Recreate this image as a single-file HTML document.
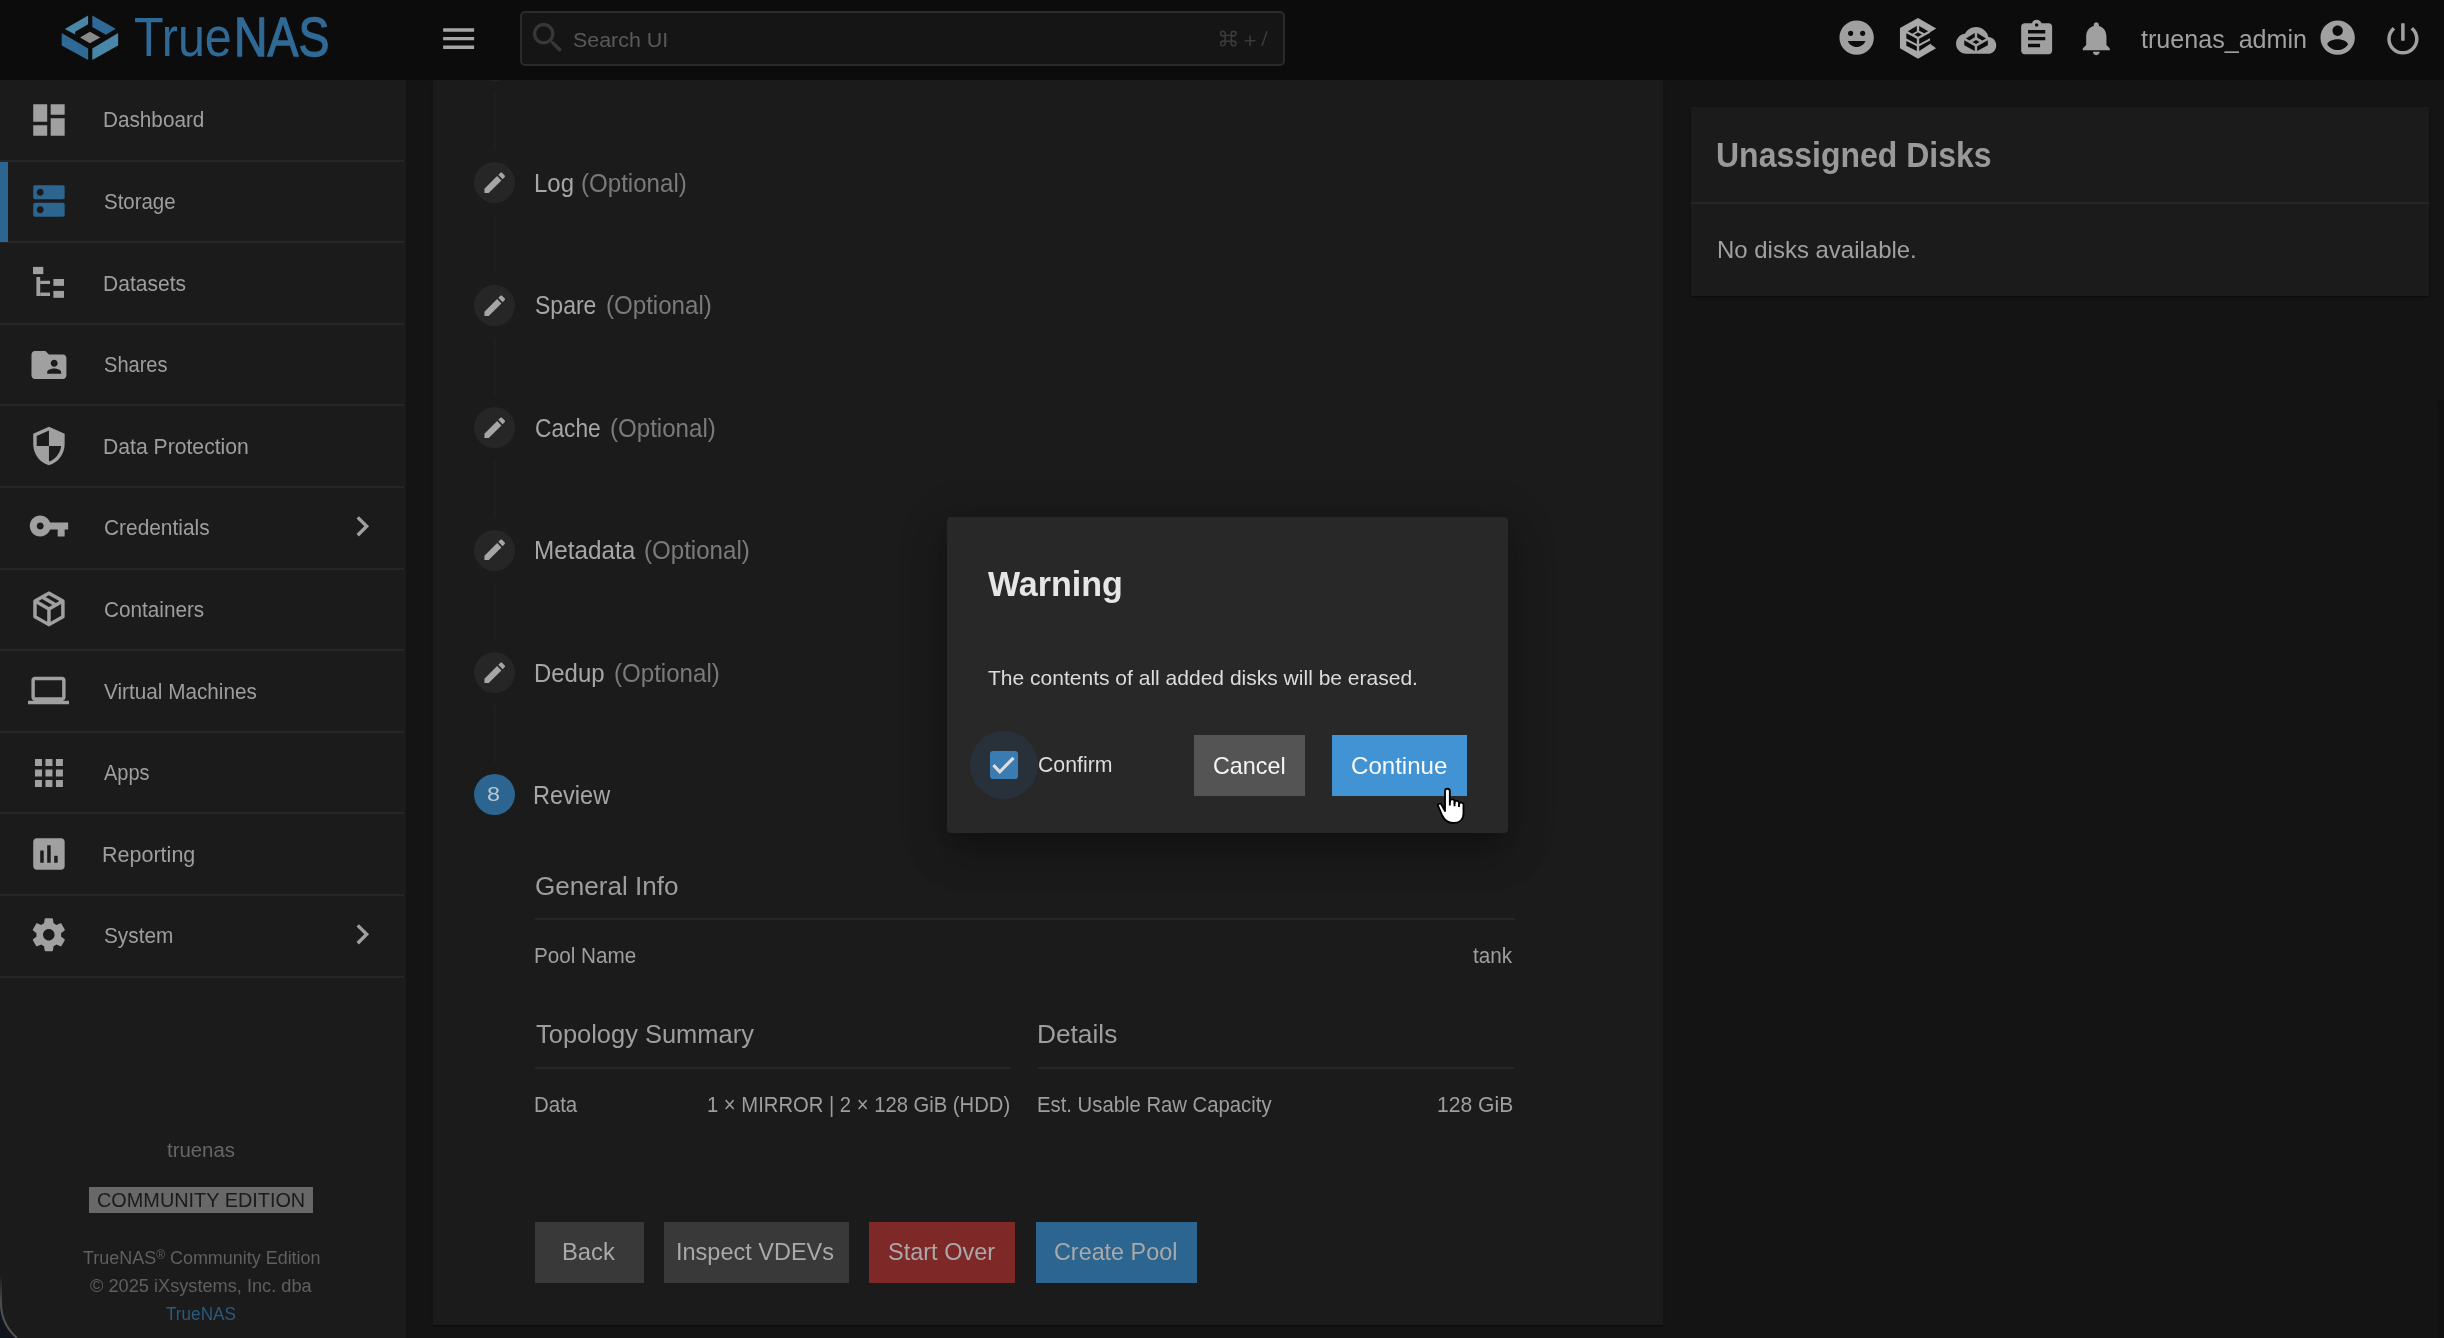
<!DOCTYPE html>
<html><head><meta charset="utf-8"><style>
html,body{margin:0;padding:0;width:2444px;height:1338px;overflow:hidden;background:#141414;}
body{position:relative;font-family:"Liberation Sans",sans-serif;}
.t{position:absolute;white-space:pre;line-height:1;transform:translateZ(0);}
.r{position:absolute;}
.i{position:absolute;overflow:visible;}
</style></head><body>
<div class="r" style="left:0.0px;top:0.0px;width:2444.0px;height:80.0px;background:#0c0c0c;"></div>
<svg class="i" style="left:0;top:0;width:340px;height:80px" viewBox="0 0 340 80">
<polygon fill="#4a86a8" points="64.7,29.1 88.1,15.6 88.1,24.2 75.2,31.7 75.2,34.6"/>
<polygon fill="#2f6a96" points="92.3,15.6 115.7,28.8 105.9,34.7 92.3,27.0"/>
<polygon fill="#2f6a96" points="61.7,33.1 88.1,48.5 88.1,60.1 61.7,45.4"/>
<polygon fill="#4a86a8" points="92.3,48.5 118.1,33.1 118.1,45.4 92.3,60.1"/>
<polygon fill="#8a8a8a" points="80.1,37.4 89.9,31.7 100.3,37.4 89.9,43.2"/>
</svg>
<div class="t" style="left:133.8px;top:9.9px;font-size:55px;letter-spacing:0.00px;color:#2f6a96;transform:translateZ(0) scaleX(0.8806);transform-origin:0 0;">True</div>
<div class="t" style="left:233.8px;top:9.9px;font-size:55px;letter-spacing:0.00px;color:#2f6a96;-webkit-text-stroke:1.3px #2f6a96;transform:translateZ(0) scaleX(0.8430);transform-origin:0 0;">NAS</div>
<svg class="i" style="left:437.8px;top:17.7px;width:41.3px;height:41.3px;" viewBox="0 0 24 24"><path fill="#a6a6a6" d="M3 18h18v-2H3v2zm0-5h18v-2H3v2zm0-7v2h18V6H3z"/></svg>
<div class="r" style="left:520.0px;top:10.8px;width:765.0px;height:55.2px;background:#151515;box-sizing:border-box;border:2px solid #2a2a2a;border-radius:5px;"></div>
<svg class="i" style="left:528.3px;top:18.2px;width:39.7px;height:39.7px;" viewBox="0 0 24 24"><path fill="#383838" d="M15.5 14h-.79l-.28-.27C15.41 12.59 16 11.11 16 9.5 16 5.91 13.09 3 9.5 3S3 5.91 3 9.5 5.91 16 9.5 16c1.61 0 3.09-.59 4.23-1.57l.27.28v.79l5 4.99L20.49 19l-4.99-5zm-6 0C7.01 14 5 11.99 5 9.5S7.01 5 9.5 5 14 7.01 14 9.5 11.99 14 9.5 14z"/></svg>
<div class="t" style="left:572.6px;top:29.2px;font-size:21px;letter-spacing:0.00px;color:#5a5a5a;transform:translateZ(0) scaleX(1.0198);transform-origin:0 0;">Search UI</div>
<svg class="i" style="left:1215px;top:26px;width:60px;height:26px" viewBox="1215 26 60 26"><g fill="none" stroke="#3a3a3a" stroke-width="1.6"><path d="M1225.2 35.2 H1231.3 V41.3 H1225.2 Z M1225.2 35.2 V33.6 A2.3 2.3 0 1 0 1222.9 35.9 H1225.2 M1231.3 35.2 V33.6 A2.3 2.3 0 1 1 1233.6 35.9 H1231.3 M1225.2 41.3 V43.4 A2.3 2.3 0 1 1 1222.9 41.1 H1225.2 M1231.3 41.3 V43.4 A2.3 2.3 0 1 0 1233.6 41.1 H1231.3"/><path d="M1250.1 35.4 V46.1 M1244.8 40.8 H1255.4"/><path d="M1267 31.2 L1262 46.1"/></g></svg>
<svg class="i" style="left:1836.0px;top:17.2px;width:41.3px;height:41.3px;" viewBox="0 0 24 24"><path fill="#a0a0a0" d="M12,2C6.47,2 2,6.5 2,12A10,10 0 0,0 12,22A10,10 0 0,0 22,12A10,10 0 0,0 12,2M15.5,8A1.5,1.5 0 0,1 17,9.5A1.5,1.5 0 0,1 15.5,11A1.5,1.5 0 0,1 14,9.5A1.5,1.5 0 0,1 15.5,8M8.5,8A1.5,1.5 0 0,1 10,9.5A1.5,1.5 0 0,1 8.5,11A1.5,1.5 0 0,1 7,9.5A1.5,1.5 0 0,1 8.5,8M12,17.5C9.67,17.5 7.69,16.04 6.89,14H17.11C16.31,16.04 14.33,17.5 12,17.5Z"/></svg>
<svg class="i" style="left:2015.8px;top:18.2px;width:41.3px;height:41.3px;" viewBox="0 0 24 24"><path fill="#a0a0a0" d="M19 3h-4.18C14.4 1.84 13.3 1 12 1c-1.3 0-2.4.84-2.82 2H5c-1.1 0-2 .9-2 2v14c0 1.1.9 2 2 2h14c1.1 0 2-.9 2-2V5c0-1.1-.9-2-2-2zm-7 0c.55 0 1 .45 1 1s-.45 1-1 1-1-.45-1-1 .45-1 1-1zm2 14H7v-2h7v2zm3-4H7v-2h10v2zm0-4H7V7h10v2z"/></svg>
<svg class="i" style="left:2076.2px;top:18.0px;width:40.6px;height:40.6px;" viewBox="0 0 24 24"><path fill="#a0a0a0" d="M12 22c1.1 0 2-.9 2-2h-4c0 1.1.89 2 2 2zm6-6v-5c0-3.07-1.64-5.64-4.5-6.32V4c0-.83-.67-1.5-1.5-1.5s-1.5.67-1.5 1.5v.68C7.63 5.36 6 7.92 6 11v5l-2 2v1h16v-1l-2-2z"/></svg>
<div class="t" style="left:2140.7px;top:26.8px;font-size:25px;letter-spacing:0.00px;color:#a0a0a0;transform:translateZ(0) scaleX(1.0037);transform-origin:0 0;">truenas_admin</div>
<svg class="i" style="left:2317.2px;top:17.1px;width:41.3px;height:41.3px;" viewBox="0 0 24 24"><path fill="#a0a0a0" d="M12 2C6.48 2 2 6.48 2 12s4.48 10 10 10 10-4.48 10-10S17.52 2 12 2zm0 3c1.66 0 3 1.34 3 3s-1.34 3-3 3-3-1.34-3-3 1.34-3 3-3zm0 14.2c-2.5 0-4.71-1.28-6-3.22.03-1.99 4-3.08 6-3.08 1.99 0 5.97 1.09 6 3.08-1.29 1.94-3.5 3.22-6 3.22z"/></svg>
<svg class="i" style="left:2381.6px;top:17.8px;width:41.8px;height:41.8px;" viewBox="0 0 24 24"><path fill="#a0a0a0" d="M13 3h-2v10h2V3zm4.83 2.17l-1.42 1.42C17.99 7.86 19 9.81 19 12c0 3.87-3.13 7-7 7s-7-3.13-7-7c0-2.19 1.01-4.14 2.58-5.42L6.17 5.17C4.23 6.82 3 9.26 3 12c0 4.97 4.03 9 9 9s9-4.03 9-9c0-2.74-1.23-5.18-3.17-6.83z"/></svg>
<svg class="i" style="left:1896px;top:16px;width:44px;height:46px" viewBox="0 0 1280 1338">
<polygon fill="#a8a8a8" points="640,55 1170,365 990,470 990,810 1165,940 640,1245 115,940 115,350"/>
<g fill="#0c0c0c">
<polygon points="345,440 605,292 605,445 470,515"/>
<polygon points="675,292 935,440 820,505 675,430"/>
<polygon points="530,540 640,478 755,540 640,605"/>
<polygon points="300,500 605,662 605,815 300,658"/>
<polygon points="300,725 605,880 605,1020 300,862"/>
<polygon points="675,662 990,490 990,645 675,815"/>
<polygon points="675,880 990,710 990,815 675,1020"/>
</g>
</svg>
<svg class="i" style="left:1952px;top:22px;width:48px;height:36px" viewBox="0 0 1784 1338">
<g transform="translate(150,-64) scale(62.26)"><path fill="#a0a0a0" d="M19.35 10.04C18.67 6.59 15.64 4 12 4 9.11 4 6.6 5.64 5.35 8.04 2.34 8.36 0 10.91 0 14c0 3.31 2.69 6 6 6h13c2.76 0 5-2.24 5-5 0-2.64-2.05-4.78-4.65-4.96z"/></g>
<g fill="#0c0c0c">
<polygon points="515,610 845,410 845,570 650,690"/>
<polygon points="935,410 1265,610 1130,690 935,575"/>
<polygon points="760,740 895,665 1025,740 895,815"/>
<polygon points="455,680 845,900 845,1075 455,860"/>
<polygon points="935,900 1330,680 1330,860 935,1075"/>
</g>
</svg>
<div class="r" style="left:0.0px;top:80.0px;width:406.0px;height:1258.0px;background:#1b1b1b;"></div>
<div class="r" style="left:0.0px;top:159.6px;width:404.0px;height:2.0px;background:#262626;"></div>
<svg class="i" style="left:27.6px;top:98.7px;width:41.9px;height:41.9px;" viewBox="0 0 24 24"><path fill="#a0a0a0" d="M3 13h8V3H3v10zm0 8h8v-6H3v6zm10 0h8V11h-8v10zm0-18v6h8V3h-8z"/></svg>
<div class="t" style="left:102.5px;top:109.4px;font-size:22px;letter-spacing:0.00px;color:#9e9e9e;transform:translateZ(0) scaleX(0.9419);transform-origin:0 0;">Dashboard</div>
<div class="r" style="left:0.0px;top:241.2px;width:404.0px;height:2.0px;background:#262626;"></div>
<svg class="i" style="left:27.6px;top:180.3px;width:41.9px;height:41.9px;" viewBox="0 0 24 24"><path fill="#2c6590" d="M20 13H4c-.55 0-1 .45-1 1v6c0 .55.45 1 1 1h16c.55 0 1-.45 1-1v-6c0-.55-.45-1-1-1zM7 19c-1.1 0-2-.9-2-2s.9-2 2-2 2 .9 2 2-.9 2-2 2zM20 3H4c-.55 0-1 .45-1 1v6c0 .55.45 1 1 1h16c.55 0 1-.45 1-1V4c0-.55-.45-1-1-1zM7 9c-1.1 0-2-.9-2-2s.9-2 2-2 2 .9 2 2-.9 2-2 2z"/></svg>
<div class="t" style="left:103.5px;top:191.0px;font-size:22px;letter-spacing:0.00px;color:#9e9e9e;transform:translateZ(0) scaleX(0.9293);transform-origin:0 0;">Storage</div>
<div class="r" style="left:0.0px;top:322.8px;width:404.0px;height:2.0px;background:#262626;"></div>
<svg class="i" style="left:0;top:-0.5px;width:80px;height:320px" viewBox="0 0 80 320">
<rect fill="#a0a0a0" x="33" y="266.9" width="10.3" height="7.2"/>
<rect fill="#a0a0a0" x="36.4" y="277" width="3.8" height="19"/>
<rect fill="#a0a0a0" x="40.2" y="280.8" width="9.8" height="3.2"/>
<rect fill="#a0a0a0" x="40.2" y="292.6" width="9.8" height="3.4"/>
<rect fill="#a0a0a0" x="53.4" y="279" width="10.6" height="6.9"/>
<rect fill="#a0a0a0" x="53.4" y="290.9" width="10.6" height="6.9"/>
</svg>
<div class="t" style="left:102.5px;top:272.6px;font-size:22px;letter-spacing:0.00px;color:#9e9e9e;transform:translateZ(0) scaleX(0.9560);transform-origin:0 0;">Datasets</div>
<div class="r" style="left:0.0px;top:404.4px;width:404.0px;height:2.0px;background:#262626;"></div>
<svg class="i" style="left:27.6px;top:343.5px;width:41.9px;height:41.9px;" viewBox="0 0 24 24"><path fill="#a0a0a0" d="M20 6h-8l-2-2H4c-1.1 0-1.99.9-1.99 2L2 18c0 1.1.9 2 2 2h16c1.1 0 2-.9 2-2V8c0-1.1-.9-2-2-2zm-5 3c1.1 0 2 .9 2 2s-.9 2-2 2-2-.9-2-2 .9-2 2-2zm4 8h-8v-1c0-1.33 2.67-2 4-2s4 .67 4 2v1z"/></svg>
<div class="t" style="left:103.5px;top:354.2px;font-size:22px;letter-spacing:0.00px;color:#9e9e9e;transform:translateZ(0) scaleX(0.9118);transform-origin:0 0;">Shares</div>
<div class="r" style="left:0.0px;top:486.0px;width:404.0px;height:2.0px;background:#262626;"></div>
<svg class="i" style="left:27.6px;top:425.1px;width:41.9px;height:41.9px;" viewBox="0 0 24 24"><path fill="#a0a0a0" d="M12 1L3 5v6c0 5.55 3.84 10.74 9 12 5.16-1.26 9-6.45 9-12V5l-9-4zm0 10.99h7c-.53 4.12-3.28 7.79-7 8.94V12H5V6.3l7-3.11v8.8z"/></svg>
<div class="t" style="left:102.5px;top:435.8px;font-size:22px;letter-spacing:0.00px;color:#9e9e9e;transform:translateZ(0) scaleX(0.9617);transform-origin:0 0;">Data Protection</div>
<div class="r" style="left:0.0px;top:567.6px;width:404.0px;height:2.0px;background:#262626;"></div>
<svg class="i" style="left:27.6px;top:504.7px;width:41.9px;height:41.9px;" viewBox="0 0 24 24"><path fill="#a0a0a0" d="M12.65 10C11.83 7.67 9.61 6 7 6c-3.31 0-6 2.69-6 6s2.69 6 6 6c2.61 0 4.83-1.67 5.65-4H17v4h4v-4h2v-4H12.65zM7 14c-1.1 0-2-.9-2-2s.9-2 2-2 2 .9 2 2-.9 2-2 2z"/></svg>
<div class="t" style="left:103.5px;top:517.4px;font-size:22px;letter-spacing:0.00px;color:#9e9e9e;transform:translateZ(0) scaleX(0.9491);transform-origin:0 0;">Credentials</div>
<svg class="i" style="left:342.1px;top:506.4px;width:40.6px;height:40.6px;" viewBox="0 0 24 24"><path fill="#a0a0a0" d="M10 6L8.59 7.41 13.17 12l-4.58 4.59L10 18l6-6z"/></svg>
<div class="r" style="left:0.0px;top:649.2px;width:404.0px;height:2.0px;background:#262626;"></div>
<svg class="i" style="left:27.6px;top:588.3px;width:41.9px;height:41.9px;" viewBox="0 0 24 24"><path fill="#a0a0a0" d="M21,16.5C21,16.88 20.79,17.21 20.47,17.38L12.57,21.82C12.41,21.94 12.21,22 12,22C11.79,22 11.59,21.94 11.43,21.82L3.53,17.38C3.21,17.21 3,16.88 3,16.5V7.5C3,7.12 3.21,6.79 3.53,6.62L11.43,2.18C11.59,2.06 11.79,2 12,2C12.21,2 12.41,2.06 12.57,2.18L20.47,6.62C20.79,6.79 21,7.12 21,7.5V16.5M12,4.15L10.11,5.22L16,8.61L17.96,7.5L12,4.15M6.04,7.5L12,10.85L13.96,9.75L8.08,6.35L6.04,7.5M5,15.91L11,19.29V12.58L5,9.21V15.91M19,15.91V9.21L13,12.58V19.29L19,15.91Z"/></svg>
<div class="t" style="left:103.5px;top:599.0px;font-size:22px;letter-spacing:0.00px;color:#9e9e9e;transform:translateZ(0) scaleX(0.9419);transform-origin:0 0;">Containers</div>
<div class="r" style="left:0.0px;top:730.8px;width:404.0px;height:2.0px;background:#262626;"></div>
<svg class="i" style="left:27.8px;top:669.8px;width:41.0px;height:41.0px;" viewBox="0 0 24 24"><path fill="#a0a0a0" d="M20 18c1.1 0 1.99-.9 1.99-2L22 6c0-1.1-.9-2-2-2H4c-1.1 0-2 .9-2 2v10c0 1.1.9 2 2 2H0v2h24v-2h-4zM4 6h16v10H4V6z"/></svg>
<div class="t" style="left:104.4px;top:680.6px;font-size:22px;letter-spacing:0.00px;color:#9e9e9e;transform:translateZ(0) scaleX(0.9426);transform-origin:0 0;">Virtual Machines</div>
<div class="r" style="left:0.0px;top:812.4px;width:404.0px;height:2.0px;background:#262626;"></div>
<svg class="i" style="left:27.6px;top:751.5px;width:41.9px;height:41.9px;" viewBox="0 0 24 24"><path fill="#a0a0a0" d="M4 8h4V4H4v4zm6 12h4v-4h-4v4zm-6 0h4v-4H4v4zm0-6h4v-4H4v4zm6 0h4v-4h-4v4zm6-10v4h4V4h-4zm-6 4h4V4h-4v4zm6 6h4v-4h-4v4zm0 6h4v-4h-4v4z"/></svg>
<div class="t" style="left:104.4px;top:762.2px;font-size:22px;letter-spacing:0.00px;color:#9e9e9e;transform:translateZ(0) scaleX(0.9100);transform-origin:0 0;">Apps</div>
<div class="r" style="left:0.0px;top:894.0px;width:404.0px;height:2.0px;background:#262626;"></div>
<svg class="i" style="left:27.6px;top:833.1px;width:41.9px;height:41.9px;" viewBox="0 0 24 24"><path fill="#a0a0a0" d="M19 3H5c-1.1 0-2 .9-2 2v14c0 1.1.9 2 2 2h14c1.1 0 2-.9 2-2V5c0-1.1-.9-2-2-2zM9 17H7v-7h2v7zm4 0h-2V7h2v10zm4 0h-2v-4h2v4z"/></svg>
<div class="t" style="left:102.4px;top:843.8px;font-size:22px;letter-spacing:0.00px;color:#9e9e9e;transform:translateZ(0) scaleX(0.9783);transform-origin:0 0;">Reporting</div>
<div class="r" style="left:0.0px;top:975.6px;width:404.0px;height:2.0px;background:#262626;"></div>
<svg class="i" style="left:28.6px;top:914.5px;width:39.6px;height:39.6px;" viewBox="0 0 24 24"><path fill="#a0a0a0" d="M19.43 12.98c.04-.32.07-.64.07-.98s-.03-.66-.07-.98l2.11-1.65c.19-.15.24-.42.12-.64l-2-3.46c-.12-.22-.39-.3-.61-.22l-2.49 1c-.52-.4-1.08-.73-1.69-.98l-.38-2.65C14.46 2.18 14.25 2 14 2h-4c-.25 0-.46.18-.49.42l-.38 2.65c-.61.25-1.17.59-1.69.98l-2.49-1c-.23-.09-.49 0-.61.22l-2 3.46c-.13.22-.07.49.12.64l2.11 1.65c-.04.32-.07.65-.07.98s.03.66.07.98l-2.11 1.65c-.19.15-.24.42-.12.64l2 3.46c.12.22.39.3.61.22l2.49-1c.52.4 1.08.73 1.69.98l.38 2.65c.03.24.24.42.49.42h4c.25 0 .46-.18.49-.42l.38-2.65c.61-.25 1.17-.59 1.69-.98l2.49 1c.23.09.49 0 .61-.22l2-3.46c.12-.22.07-.49-.12-.64l-2.11-1.65zM12 15.5c-1.93 0-3.5-1.57-3.5-3.5s1.57-3.5 3.5-3.5 3.5 1.57 3.5 3.5-1.57 3.5-3.5 3.5z"/></svg>
<div class="t" style="left:103.5px;top:925.4px;font-size:22px;letter-spacing:0.00px;color:#9e9e9e;transform:translateZ(0) scaleX(0.9451);transform-origin:0 0;">System</div>
<svg class="i" style="left:342.1px;top:914.4px;width:40.6px;height:40.6px;" viewBox="0 0 24 24"><path fill="#a0a0a0" d="M10 6L8.59 7.41 13.17 12l-4.58 4.59L10 18l6-6z"/></svg>
<div class="r" style="left:0.0px;top:161.5px;width:8.0px;height:80.0px;background:#2c6590;"></div>
<div class="t" style="left:166.9px;top:1140.3px;font-size:20.5px;letter-spacing:0.00px;color:#666666;transform:translateZ(0) scaleX(0.9941);transform-origin:0 0;">truenas</div>
<div class="r" style="left:89.0px;top:1187.0px;width:224.0px;height:26.0px;background:#686868;"></div>
<div class="t" style="left:96.7px;top:1190.1px;font-size:20px;letter-spacing:0.00px;color:#1b1b1b;transform:translateZ(0) scaleX(0.9932);transform-origin:0 0;">COMMUNITY EDITION</div>
<div class="t" style="left:82.7px;top:1248.6px;font-size:18px;letter-spacing:0.00px;color:#5f5f5f;transform:translateZ(0) scaleX(0.9970);transform-origin:0 0;">TrueNAS<span style="font-size:12px;vertical-align:5px">®</span> Community Edition</div>
<div class="t" style="left:90.2px;top:1277.0px;font-size:18px;letter-spacing:0.00px;color:#5f5f5f;transform:translateZ(0) scaleX(1.0105);transform-origin:0 0;">© 2025 iXsystems, Inc. dba</div>
<div class="t" style="left:166.4px;top:1304.7px;font-size:18px;letter-spacing:0.00px;color:#295a7f;transform:translateZ(0) scaleX(0.9534);transform-origin:0 0;">TrueNAS</div>
<div class="r" style="left:433.0px;top:80.0px;width:1230.0px;height:1244.5px;background:#1b1b1b;box-shadow:0 2px 1px -1px rgba(0,0,0,.2),0 1px 1px 0 rgba(0,0,0,.14),0 1px 3px 0 rgba(0,0,0,.12);"></div>
<div class="r" style="left:494.0px;top:93.0px;width:2.0px;height:57.4px;background:#1f1f1f;"></div>
<div class="r" style="left:494.0px;top:215.4px;width:2.0px;height:57.4px;background:#1f1f1f;"></div>
<div class="r" style="left:494.0px;top:337.8px;width:2.0px;height:57.4px;background:#1f1f1f;"></div>
<div class="r" style="left:494.0px;top:460.2px;width:2.0px;height:57.4px;background:#1f1f1f;"></div>
<div class="r" style="left:494.0px;top:582.6px;width:2.0px;height:57.4px;background:#1f1f1f;"></div>
<div class="r" style="left:494.0px;top:705.0px;width:2.0px;height:57.4px;background:#1f1f1f;"></div>
<div class="r" style="left:473.9px;top:162.4px;width:41.0px;height:41.0px;background:#262626;border-radius:50%;"></div>
<svg class="i" style="left:480.7px;top:169.2px;width:27.5px;height:27.5px;" viewBox="0 0 24 24"><path fill="#a6a6a6" d="M3 17.25V21h3.75L17.81 9.94l-3.75-3.75L3 17.25zM20.71 7.04c.39-.39.39-1.02 0-1.41l-2.34-2.34c-.39-.39-1.02-.39-1.41 0l-1.83 1.83 3.75 3.75 1.83-1.83z"/></svg>
<div class="t" style="left:534.1px;top:171.0px;font-size:25px;letter-spacing:0.00px;color:#a6a6a6;transform:translateZ(0) scaleX(0.9579);transform-origin:0 0;">Log</div>
<div class="t" style="left:581.3px;top:171.0px;font-size:25px;letter-spacing:0.00px;color:#7a7a7a;transform:translateZ(0) scaleX(0.9639);transform-origin:0 0;">(Optional)</div>
<div class="r" style="left:473.9px;top:284.8px;width:41.0px;height:41.0px;background:#262626;border-radius:50%;"></div>
<svg class="i" style="left:480.7px;top:291.6px;width:27.5px;height:27.5px;" viewBox="0 0 24 24"><path fill="#a6a6a6" d="M3 17.25V21h3.75L17.81 9.94l-3.75-3.75L3 17.25zM20.71 7.04c.39-.39.39-1.02 0-1.41l-2.34-2.34c-.39-.39-1.02-.39-1.41 0l-1.83 1.83 3.75 3.75 1.83-1.83z"/></svg>
<div class="t" style="left:535.1px;top:293.4px;font-size:25px;letter-spacing:0.00px;color:#a6a6a6;transform:translateZ(0) scaleX(0.9200);transform-origin:0 0;">Spare</div>
<div class="t" style="left:605.9px;top:293.4px;font-size:25px;letter-spacing:0.00px;color:#7a7a7a;transform:translateZ(0) scaleX(0.9639);transform-origin:0 0;">(Optional)</div>
<div class="r" style="left:473.9px;top:407.2px;width:41.0px;height:41.0px;background:#262626;border-radius:50%;"></div>
<svg class="i" style="left:480.7px;top:414.0px;width:27.5px;height:27.5px;" viewBox="0 0 24 24"><path fill="#a6a6a6" d="M3 17.25V21h3.75L17.81 9.94l-3.75-3.75L3 17.25zM20.71 7.04c.39-.39.39-1.02 0-1.41l-2.34-2.34c-.39-.39-1.02-.39-1.41 0l-1.83 1.83 3.75 3.75 1.83-1.83z"/></svg>
<div class="t" style="left:535.1px;top:415.8px;font-size:25px;letter-spacing:0.00px;color:#a6a6a6;transform:translateZ(0) scaleX(0.9100);transform-origin:0 0;">Cache</div>
<div class="t" style="left:609.8px;top:415.8px;font-size:25px;letter-spacing:0.00px;color:#7a7a7a;transform:translateZ(0) scaleX(0.9639);transform-origin:0 0;">(Optional)</div>
<div class="r" style="left:473.9px;top:529.6px;width:41.0px;height:41.0px;background:#262626;border-radius:50%;"></div>
<svg class="i" style="left:480.7px;top:536.4px;width:27.5px;height:27.5px;" viewBox="0 0 24 24"><path fill="#a6a6a6" d="M3 17.25V21h3.75L17.81 9.94l-3.75-3.75L3 17.25zM20.71 7.04c.39-.39.39-1.02 0-1.41l-2.34-2.34c-.39-.39-1.02-.39-1.41 0l-1.83 1.83 3.75 3.75 1.83-1.83z"/></svg>
<div class="t" style="left:534.1px;top:538.2px;font-size:25px;letter-spacing:0.00px;color:#a6a6a6;transform:translateZ(0) scaleX(0.9706);transform-origin:0 0;">Metadata</div>
<div class="t" style="left:644.3px;top:538.2px;font-size:25px;letter-spacing:0.00px;color:#7a7a7a;transform:translateZ(0) scaleX(0.9639);transform-origin:0 0;">(Optional)</div>
<div class="r" style="left:473.9px;top:652.0px;width:41.0px;height:41.0px;background:#262626;border-radius:50%;"></div>
<svg class="i" style="left:480.7px;top:658.8px;width:27.5px;height:27.5px;" viewBox="0 0 24 24"><path fill="#a6a6a6" d="M3 17.25V21h3.75L17.81 9.94l-3.75-3.75L3 17.25zM20.71 7.04c.39-.39.39-1.02 0-1.41l-2.34-2.34c-.39-.39-1.02-.39-1.41 0l-1.83 1.83 3.75 3.75 1.83-1.83z"/></svg>
<div class="t" style="left:534.1px;top:660.6px;font-size:25px;letter-spacing:0.00px;color:#a6a6a6;transform:translateZ(0) scaleX(0.9577);transform-origin:0 0;">Dedup</div>
<div class="t" style="left:613.6px;top:660.6px;font-size:25px;letter-spacing:0.00px;color:#7a7a7a;transform:translateZ(0) scaleX(0.9639);transform-origin:0 0;">(Optional)</div>
<div class="r" style="left:473.9px;top:40.0px;width:41.0px;height:41.0px;background:#262626;border-radius:50%;"></div>
<div class="r" style="left:473.9px;top:774.4px;width:41.0px;height:41.0px;background:#2c6590;border-radius:50%;"></div>
<div class="t" style="left:487.0px;top:784.5px;font-size:19.5px;letter-spacing:0.00px;color:#b9c7d2;transform:translateZ(0) scaleX(1.2000);transform-origin:0 0;">8</div>
<div class="t" style="left:533.1px;top:783.0px;font-size:25px;letter-spacing:0.00px;color:#a6a6a6;transform:translateZ(0) scaleX(0.9412);transform-origin:0 0;">Review</div>
<div class="r" style="left:433.0px;top:0.0px;width:1230.0px;height:80.0px;background:#0c0c0c;"></div>
<div class="r" style="left:520.0px;top:10.8px;width:765.0px;height:55.2px;background:#151515;box-sizing:border-box;border:2px solid #2a2a2a;border-radius:5px;"></div>
<svg class="i" style="left:528.3px;top:18.2px;width:39.7px;height:39.7px;" viewBox="0 0 24 24"><path fill="#383838" d="M15.5 14h-.79l-.28-.27C15.41 12.59 16 11.11 16 9.5 16 5.91 13.09 3 9.5 3S3 5.91 3 9.5 5.91 16 9.5 16c1.61 0 3.09-.59 4.23-1.57l.27.28v.79l5 4.99L20.49 19l-4.99-5zm-6 0C7.01 14 5 11.99 5 9.5S7.01 5 9.5 5 14 7.01 14 9.5 11.99 14 9.5 14z"/></svg>
<div class="t" style="left:572.6px;top:29.2px;font-size:21px;letter-spacing:0.00px;color:#5a5a5a;transform:translateZ(0) scaleX(1.0198);transform-origin:0 0;">Search UI</div>
<svg class="i" style="left:1215px;top:26px;width:60px;height:26px" viewBox="1215 26 60 26"><g fill="none" stroke="#3a3a3a" stroke-width="1.6"><path d="M1225.2 35.2 H1231.3 V41.3 H1225.2 Z M1225.2 35.2 V33.6 A2.3 2.3 0 1 0 1222.9 35.9 H1225.2 M1231.3 35.2 V33.6 A2.3 2.3 0 1 1 1233.6 35.9 H1231.3 M1225.2 41.3 V43.4 A2.3 2.3 0 1 1 1222.9 41.1 H1225.2 M1231.3 41.3 V43.4 A2.3 2.3 0 1 0 1233.6 41.1 H1231.3"/><path d="M1250.1 35.4 V46.1 M1244.8 40.8 H1255.4"/><path d="M1267 31.2 L1262 46.1"/></g></svg>
<svg class="i" style="left:437.8px;top:17.7px;width:41.3px;height:41.3px;" viewBox="0 0 24 24"><path fill="#a6a6a6" d="M3 18h18v-2H3v2zm0-5h18v-2H3v2zm0-7v2h18V6H3z"/></svg>
<div class="t" style="left:535.0px;top:873.6px;font-size:25.7px;letter-spacing:0.00px;color:#9e9e9e;transform:translateZ(0) scaleX(1.0151);transform-origin:0 0;">General Info</div>
<div class="r" style="left:535.0px;top:918.0px;width:980.0px;height:2.0px;background:#262626;"></div>
<div class="t" style="left:534.1px;top:946.1px;font-size:21.5px;letter-spacing:0.00px;color:#9e9e9e;transform:translateZ(0) scaleX(0.9615);transform-origin:0 0;">Pool Name</div>
<div class="t" style="left:1473.2px;top:946.1px;font-size:21.5px;letter-spacing:0.00px;color:#9e9e9e;transform:translateZ(0) scaleX(0.9610);transform-origin:0 0;">tank</div>
<div class="t" style="left:536.0px;top:1022.2px;font-size:25.7px;letter-spacing:0.00px;color:#9e9e9e;transform:translateZ(0) scaleX(0.9909);transform-origin:0 0;">Topology Summary</div>
<div class="r" style="left:535.0px;top:1067.0px;width:475.5px;height:2.0px;background:#262626;"></div>
<div class="t" style="left:1037.1px;top:1022.0px;font-size:25.7px;letter-spacing:0.00px;color:#9e9e9e;transform:translateZ(0) scaleX(1.0224);transform-origin:0 0;">Details</div>
<div class="r" style="left:1038.0px;top:1067.0px;width:476.0px;height:2.0px;background:#262626;"></div>
<div class="t" style="left:534.1px;top:1095.0px;font-size:21.5px;letter-spacing:0.00px;color:#9e9e9e;transform:translateZ(0) scaleX(0.9523);transform-origin:0 0;">Data</div>
<div class="t" style="left:707.4px;top:1095.0px;font-size:21.5px;letter-spacing:0.00px;color:#9e9e9e;transform:translateZ(0) scaleX(0.9409);transform-origin:0 0;">1 × MIRROR | 2 × 128 GiB (HDD)</div>
<div class="t" style="left:1037.1px;top:1094.8px;font-size:21.5px;letter-spacing:0.00px;color:#9e9e9e;transform:translateZ(0) scaleX(0.9437);transform-origin:0 0;">Est. Usable Raw Capacity</div>
<div class="t" style="left:1437.0px;top:1094.8px;font-size:21.5px;letter-spacing:0.00px;color:#9e9e9e;transform:translateZ(0) scaleX(0.9816);transform-origin:0 0;">128 GiB</div>
<div class="r" style="left:535.0px;top:1222.0px;width:109.0px;height:61.0px;background:#393939;"></div>
<div class="t" style="left:562.3px;top:1240.1px;font-size:24.8px;letter-spacing:0.00px;color:#a9a9a9;transform:translateZ(0) scaleX(0.9585);transform-origin:0 0;">Back</div>
<div class="r" style="left:664.0px;top:1222.0px;width:185.0px;height:61.0px;background:#393939;"></div>
<div class="t" style="left:676.4px;top:1240.1px;font-size:24.8px;letter-spacing:0.00px;color:#a9a9a9;transform:translateZ(0) scaleX(0.9476);transform-origin:0 0;">Inspect VDEVs</div>
<div class="r" style="left:869.0px;top:1222.0px;width:146.0px;height:61.0px;background:#7f2828;"></div>
<div class="t" style="left:887.8px;top:1240.1px;font-size:24.8px;letter-spacing:0.00px;color:#a9a9a9;transform:translateZ(0) scaleX(0.9473);transform-origin:0 0;">Start Over</div>
<div class="r" style="left:1036.0px;top:1222.0px;width:161.0px;height:61.0px;background:#2c6590;"></div>
<div class="t" style="left:1054.3px;top:1240.1px;font-size:24.8px;letter-spacing:0.00px;color:#a9a9a9;transform:translateZ(0) scaleX(0.9419);transform-origin:0 0;">Create Pool</div>
<div class="r" style="left:1691.0px;top:106.5px;width:738.0px;height:189.0px;background:#1b1b1b;box-shadow:0 2px 1px -1px rgba(0,0,0,.2),0 1px 1px 0 rgba(0,0,0,.14),0 1px 3px 0 rgba(0,0,0,.12);"></div>
<div class="r" style="left:1691.0px;top:202.0px;width:738.0px;height:2.0px;background:#262626;"></div>
<div class="t" style="left:1716.4px;top:137.5px;font-size:34.7px;letter-spacing:0.00px;color:#999999;font-weight:700;transform:translateZ(0) scaleX(0.9220);transform-origin:0 0;">Unassigned Disks</div>
<div class="t" style="left:1716.7px;top:238.3px;font-size:24.5px;letter-spacing:0.00px;color:#a0a0a0;transform:translateZ(0) scaleX(0.9780);transform-origin:0 0;">No disks available.</div>
<div class="r" style="left:2438.0px;top:400.0px;width:6.0px;height:938.0px;background:#101010;border-radius:4px 0 0 0;"></div>
<div class="r" style="left:947.0px;top:517.0px;width:561.0px;height:316.0px;background:#282828;border-radius:4px;box-shadow:0 11px 15px -7px rgba(0,0,0,.2),0 24px 38px 3px rgba(0,0,0,.14),0 9px 46px 8px rgba(0,0,0,.12);"></div>
<div class="t" style="left:987.8px;top:567.0px;font-size:34.5px;letter-spacing:0.00px;color:#e6e6e6;font-weight:700;transform:translateZ(0) scaleX(0.9859);transform-origin:0 0;">Warning</div>
<div class="t" style="left:987.8px;top:667.3px;font-size:21px;letter-spacing:0.00px;color:#dcdcdc;transform:translateZ(0) scaleX(1.0009);transform-origin:0 0;">The contents of all added disks will be erased.</div>
<div class="r" style="left:969.8px;top:731.3px;width:67.8px;height:67.8px;background:#28313a;border-radius:50%;"></div>
<div class="r" style="left:990.4px;top:751.4px;width:28.0px;height:28.0px;background:#3a7bb2;border-radius:3px;"></div>
<svg class="i" style="left:980px;top:740px;width:50px;height:50px" viewBox="980 740 50 50"><polyline fill="none" stroke="#dedede" stroke-width="3.2" points="993.4,765.2 999.8,771.8 1013.5,757.8"/></svg>
<div class="t" style="left:1038.0px;top:754.8px;font-size:21.5px;letter-spacing:0.00px;color:#dcdcdc;transform:translateZ(0) scaleX(0.9890);transform-origin:0 0;">Confirm</div>
<div class="r" style="left:1194.0px;top:735.0px;width:111.0px;height:61.0px;background:#545454;"></div>
<div class="t" style="left:1213.1px;top:753.7px;font-size:24px;letter-spacing:0.00px;color:#f5f5f5;transform:translateZ(0) scaleX(0.9712);transform-origin:0 0;">Cancel</div>
<div class="r" style="left:1332.0px;top:735.0px;width:135.0px;height:61.0px;background:#4193d3;"></div>
<div class="t" style="left:1351.1px;top:753.7px;font-size:24px;letter-spacing:0.00px;color:#fafafa;transform:translateZ(0) scaleX(1.0032);transform-origin:0 0;">Continue</div>
<svg class="i" style="left:1425px;top:780px;width:50px;height:50px" viewBox="0 0 1338 1338">
<path fill="#ffffff" stroke="#000000" stroke-width="50" stroke-linejoin="round" d="M535 300 A65 65 0 0 1 665 300 L665 580 A62 62 0 0 1 790 580 L790 620 A60 60 0 0 1 910 620 L910 665 A60 60 0 0 1 1030 665 L1030 900 C1030 1080 900 1150 750 1150 C600 1150 520 1080 460 950 L355 705 A48 48 0 0 1 440 660 L535 830 Z"/>
<path fill="none" stroke="#000000" stroke-width="50" d="M665 560 L665 685 M790 600 L790 700 M910 640 L910 720"/>
</svg>
<svg class="i" style="left:0;top:1230px;width:40px;height:108px" viewBox="0 1230 40 108"><defs><linearGradient id="wg" x1="0" y1="1275" x2="0" y2="1305" gradientUnits="userSpaceOnUse"><stop offset="0" stop-color="#1b1b1b"/><stop offset="1" stop-color="#505050"/></linearGradient></defs><path fill="#0f141d" d="M0 1302 A48 48 0 0 0 16 1338 L0 1338 Z"/><path fill="none" stroke="url(#wg)" stroke-width="2" d="M1 1275 L1 1302 A47 47 0 0 0 17 1338"/></svg>
</body></html>
